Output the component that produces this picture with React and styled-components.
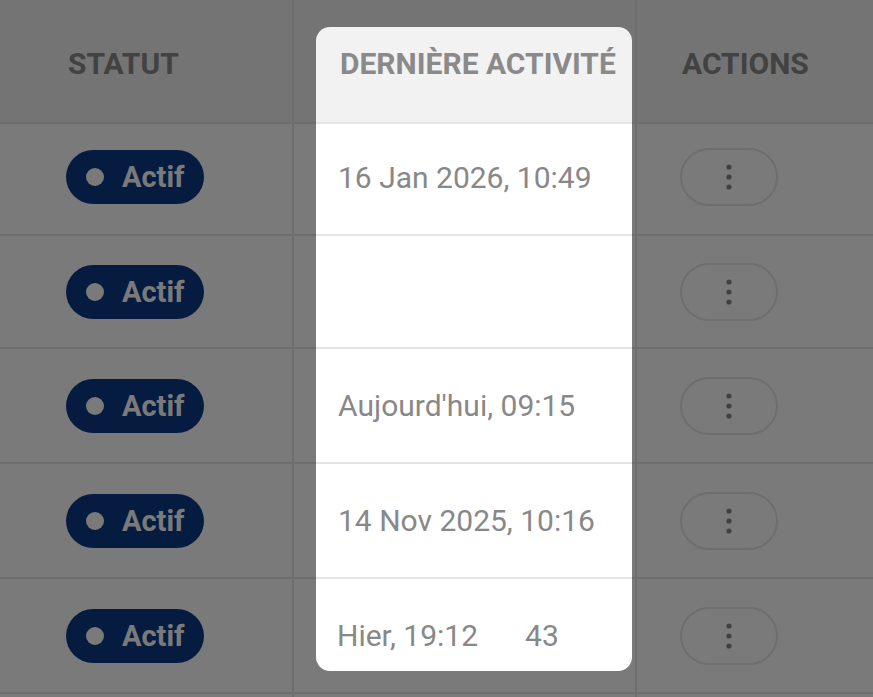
import styled, { createGlobalStyle } from 'styled-components';

const GlobalStyle = createGlobalStyle`
    html, body {
        margin: 0;
        padding: 0;
        background: #ffffff;
        overflow: hidden;
    }

    body {
        font-family: Roboto, "Liberation Sans", sans-serif;
    }
`

const Page = styled.div`
    position: relative;
    width: 873px;
    height: 697px;
    overflow: hidden;
`

const Table = styled.div`
    display: flex;
    flex-direction: column;
`

const Row = styled.div`
    display: grid;
    grid-template-columns: 294px 343px 1fr;
    height: ${ props => props.$h }px;
    box-sizing: border-box;
    border-bottom: 2px solid #e5e5e5;
    background: ${ props => props.$head ? '#f2f2f2' : '#ffffff' };
    flex-shrink: 0;
`

const Cell = styled.div`
    display: flex;
    align-items: center;
    box-sizing: border-box;
    padding-left: ${ props => props.$pl }px;
    padding-bottom: ${ props => props.$pb || 0 }px;
    border-right: ${ props => props.$last ? 'none' : '2px solid #e5e5e5' };
    min-width: 0;
`

const HeadCell = styled(Cell)`
    padding-top: 4px;
    font-size: 30px;
    font-weight: 700;
    color: #8a8a8a;
    text-transform: uppercase;
    white-space: nowrap;
`

const DateText = styled.span`
    font-size: 30px;
    color: #888888;
    white-space: nowrap;
`

const Extra = styled.span`
    margin-left: 47px;
`

const StatusPill = styled.div`
    display: flex;
    align-items: center;
    gap: 18px;
    height: 54px;
    padding: 0 20px;
    border-radius: 27px;
    background: #0c3a85;
    color: #ffffff;
    font-size: 29px;
    font-weight: 700;
`

const Dot = styled.span`
    width: 18px;
    height: 18px;
    border-radius: 50%;
    background: #ffffff;
`

const MoreButton = styled.button`
    display: flex;
    align-items: center;
    justify-content: center;
    width: 98px;
    height: 58px;
    padding: 0;
    border: 2px solid #e5e5e5;
    border-radius: 29px;
    background: transparent;
    color: #888888;
`

const Spotlight = styled.div`
    position: absolute;
    left: 316px;
    top: 27px;
    width: 316px;
    height: 644px;
    border-radius: 14px;
    box-shadow: 0 0 0 2000px rgba(0, 0, 0, 0.52);
    pointer-events: none;
`

const MoreIcon = () => (
    <svg width="6" height="26" viewBox="0 0 6 26">
        <circle cx="3" cy="3" r="2.6" fill="currentColor" />
        <circle cx="3" cy="13" r="2.6" fill="currentColor" />
        <circle cx="3" cy="23" r="2.6" fill="currentColor" />
    </svg>
)

const rows = [
    { h: 112, date: '16 Jan 2026, 10:49', pb: 4 },
    { h: 113, date: '' },
    { h: 115, date: 'Aujourd\'hui, 09:15' },
    { h: 115, date: '14 Nov 2025, 10:16' },
    { h: 115, date: 'Hier, 19:12', extra: '43', pl: 43 },
]

const App = () => {
    return(
        <Page>
            <GlobalStyle />
            <Table>
                <Row $head $h={ 124 }>
                    <HeadCell $pl={ 68 }>Statut</HeadCell>
                    <HeadCell $pl={ 46 }>Dernière activité</HeadCell>
                    <HeadCell $pl={ 45 } $last>Actions</HeadCell>
                </Row>
                { rows.map((row, i) => (
                    <Row key={ i } $h={ row.h }>
                        <Cell $pl={ 66 } $pb={ row.pb }>
                            <StatusPill><Dot />Actif</StatusPill>
                        </Cell>
                        <Cell $pl={ row.pl || 44 } $pb={ row.pb }>
                            <DateText>
                                { row.date }
                                { row.extra && <Extra>{ row.extra }</Extra> }
                            </DateText>
                        </Cell>
                        <Cell $pl={ 43 } $pb={ row.pb } $last>
                            <MoreButton><MoreIcon /></MoreButton>
                        </Cell>
                    </Row>
                )) }
                <Row $h={ 40 }>
                    <Cell />
                    <Cell />
                    <Cell $last />
                </Row>
            </Table>
            <Spotlight />
        </Page>
    )
}

export default App
